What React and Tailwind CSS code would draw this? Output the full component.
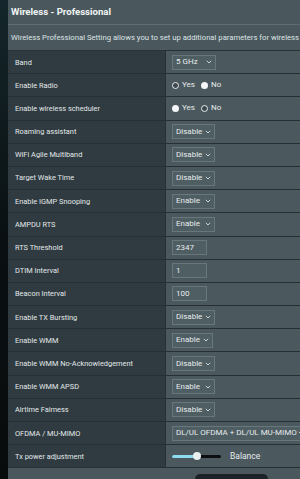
import React from "react";

const rows = [
  { label: "Band", type: "select", value: "5 GHz", w: "w-[44px]" },
  { label: "Enable Radio", type: "radio", checked: "yes" },
  { label: "Enable wireless scheduler", type: "radio", checked: "no" },
  { label: "Roaming assistant", type: "select", value: "Disable", w: "w-[43px]" },
  { label: "WiFi Agile Multiband", type: "select", value: "Disable", w: "w-[43px]" },
  { label: "Target Wake Time", type: "select", value: "Disable", w: "w-[43px]" },
  { label: "Enable IGMP Snooping", type: "select", value: "Enable", w: "w-[43px]" },
  { label: "AMPDU RTS", type: "select", value: "Enable", w: "w-[43px]" },
  { label: "RTS Threshold", type: "input", value: "2347" },
  { label: "DTIM Interval", type: "input", value: "1" },
  { label: "Beacon Interval", type: "input", value: "100" },
  { label: "Enable TX Bursting", type: "select", value: "Disable", w: "w-[43px]" },
  { label: "Enable WMM", type: "select", value: "Enable", w: "w-[41px]" },
  { label: "Enable WMM No-Acknowledgement", type: "select", value: "Disable", w: "w-[43px]" },
  { label: "Enable WMM APSD", type: "select", value: "Enable", w: "w-[43px]" },
  { label: "Airtime Fairness", type: "select", value: "Disable", w: "w-[43px]" },
  { label: "OFDMA / MU-MIMO", type: "select", value: "DL/UL OFDMA + DL/UL MU-MIMO", w: "w-[136px]" },
  { label: "Tx power adjustment", type: "slider" },
];

function Chevron() {
  return (
    <svg width="6" height="4" viewBox="0 0 6 4" className="shrink-0">
      <path d="M0.8 0.8 L3 3 L5.2 0.8" fill="none" stroke="#d8dfe2" strokeWidth="0.9" />
    </svg>
  );
}

function Radio({ on }) {
  // ring = selected, filled white = not selected (as drawn in the screenshot)
  return on ? (
    <span className="w-[7px] h-[7px] rounded-full border-[1.5px] border-[#e8ecee] bg-[#3b474c]" />
  ) : (
    <span className="w-[7px] h-[7px] rounded-full bg-[#f4f6f7]" />
  );
}

function Value({ row }) {
  if (row.type === "select") {
    return (
      <div className={`${row.w} h-[15px] flex items-center justify-between px-[3px] bg-[#4f5e63] border border-[#68777c] text-[8px] text-[#e6ebed]`}>
        <span className="whitespace-nowrap">{row.value}</span>
        <Chevron />
      </div>
    );
  }
  if (row.type === "input") {
    return (
      <div className="w-[35px] h-[15px] flex items-center px-[3px] bg-[#4f5e63] border border-[#68777c] text-[8px] text-[#e6ebed]">
        {row.value}
      </div>
    );
  }
  if (row.type === "radio") {
    return (
      <div className="flex items-center gap-[3px] text-[8px] text-[#e6ebed]">
        <Radio on={row.checked === "yes"} />
        <span className="mr-[3px]">Yes</span>
        <Radio on={row.checked === "no"} />
        <span>No</span>
      </div>
    );
  }
  return (
    <div className="flex items-center">
      <div className="relative w-[49px] h-[8px] flex items-center">
        <div className="w-full h-[3px] rounded-full bg-[#0b0f10] flex">
          <div className="w-[25px] h-full rounded-full bg-[#8fdcf2]" />
        </div>
        <div className="absolute left-[21px] w-[8px] h-[8px] rounded-full bg-[#e9eef0] shadow" />
      </div>
      <span className="ml-[9px] text-[8.5px] text-[#e6ebed]">Balance</span>
    </div>
  );
}

export default function App() {
  return (
    <div className="w-[300px] h-[479px] overflow-hidden flex bg-[#0a0f11] font-['Roboto','Liberation_Sans',sans-serif]">
      <div className="w-[8px] shrink-0 bg-gradient-to-b from-[#14262b] via-[#0a1012] to-[#080b0c]" />
      <div className="flex-1 min-w-0 bg-[#4a585d]">
        <div className="w-[420px]">
          <div className="h-[25px] flex items-center pl-[3px] border-b border-[#5f6c71]">
            <h1 className="text-[9.6px] font-bold text-[#f1f4f5] leading-none">Wireless - Professional</h1>
          </div>
          <p className="h-[25px] flex items-center pl-[3px] text-[7.7px] text-[#dde3e5] whitespace-nowrap">
            Wireless Professional Setting allows you to set up additional parameters for wireless
          </p>
          <div className="border-t border-[#283236]">
            {rows.map((row, i) => (
              <div key={i} className="flex h-[23.2px] border-b border-[#263034]">
                <div className="w-[157px] shrink-0 flex items-center pl-[7px] bg-[#2f3b40] text-[7.4px] text-[#e3e8ea] whitespace-nowrap">
                  {row.label}
                </div>
                <div className="flex-1 flex items-center pl-[6px] bg-[#4b595e] border-l border-[#263034]">
                  <Value row={row} />
                </div>
              </div>
            ))}
          </div>
          <div className="pl-[187px] pt-[6px]">
            <div className="w-[73px] h-[20px] rounded-[5px] bg-[#1b2327]" />
          </div>
        </div>
      </div>
    </div>
  );
}
